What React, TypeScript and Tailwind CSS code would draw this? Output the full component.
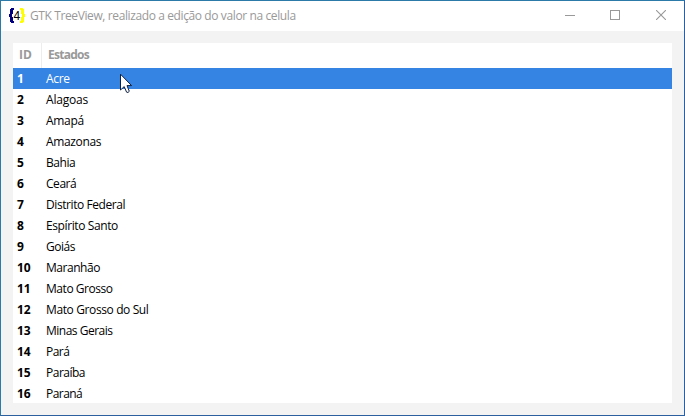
const estados = [
  { nome: "Acre", tracking: "tracking-[-0.3px]" },
  { nome: "Alagoas", tracking: "tracking-[-0.2px]" },
  { nome: "Amapá", tracking: "tracking-[-0.3px]" },
  { nome: "Amazonas", tracking: "tracking-[-0.35px]" },
  { nome: "Bahia", tracking: "tracking-[-0.45px]" },
  { nome: "Ceará", tracking: "tracking-[-0.45px]" },
  { nome: "Distrito Federal", tracking: "tracking-[-0.42px]" },
  { nome: "Espírito Santo", tracking: "tracking-[-0.39px]" },
  { nome: "Goiás", tracking: "tracking-[-0.45px]" },
  { nome: "Maranhão", tracking: "tracking-[-0.47px]" },
  { nome: "Mato Grosso", tracking: "tracking-[-0.45px]" },
  { nome: "Mato Grosso do Sul", tracking: "tracking-[-0.38px]" },
  { nome: "Minas Gerais", tracking: "tracking-[-0.5px]" },
  { nome: "Pará", tracking: "tracking-[-0.55px]" },
  { nome: "Paraíba", tracking: "tracking-[-0.5px]" },
  { nome: "Paraná", tracking: "tracking-[-0.55px]" },
];

function AppIcon() {
  return (
    <svg width="16" height="16" viewBox="0 0 16 16" className="mb-px shrink-0">
      <g shapeRendering="crispEdges">
        <path d="M2 0H5V2H4V6H3V9H4V13H5V15H2V14H1V9H0V6H1V1H2Z" fill="#000080" />
        <path d="M14 0H11V2H12V6H13V9H12V13H11V15H14V14H15V9H16V6H15V1H14Z" fill="#ffff00" />
      </g>
      <text x="4.6" y="12" fontFamily="Liberation Sans, sans-serif" fontSize="12" fill="#000">4</text>
    </svg>
  );
}

function TitleBar() {
  return (
    <header className="flex h-[30px] shrink-0 items-center bg-white pl-2">
      <AppIcon />
      <h1 className="ml-[5px] flex-1 text-[12px] leading-4 tracking-[-0.39px] text-[#999999]">
        GTK TreeView, realizado a edição do valor na celula
      </h1>
      <div className="flex self-start text-[#999999]">
        <button aria-label="Minimizar" className="flex h-7 w-11 items-center justify-center">
          <svg width="10" height="10" viewBox="0 0 10 10" shapeRendering="crispEdges"><path d="M0 5.5H10" stroke="currentColor" /></svg>
        </button>
        <button aria-label="Maximizar" className="flex h-7 w-[46px] items-center justify-center">
          <svg width="10" height="10" viewBox="0 0 10 10" fill="none" shapeRendering="crispEdges"><path d="M.5.5H9.5V9.5H.5Z" stroke="currentColor" /></svg>
        </button>
        <button aria-label="Fechar" className="flex h-7 w-[46px] items-center justify-center">
          <svg width="10" height="10" viewBox="0 0 10 10"><path d="M0 0L10 10M10 0L0 10" stroke="currentColor" strokeWidth="1.1" /></svg>
        </button>
      </div>
    </header>
  );
}

function Pointer() {
  return (
    <svg className="absolute left-[119px] top-[72px]" width="13" height="21" viewBox="0 0 13 21">
      <path d="M.5 1.2V17L4.2 13.6L6.6 19.2Q8 20.2 9.3 18.3L7 12.6H11.6Z" fill="#fff" stroke="#102040" strokeWidth="1" />
    </svg>
  );
}

export default function App() {
  return (
    <div className="relative flex h-[416px] w-[685px] flex-col overflow-hidden border border-[#2c7aa8] border-r-[#2c5f9e] border-b-[#2c5f9e] bg-[#f3f3f3] font-['Open_Sans','Noto_Sans',sans-serif] text-[12px] text-black">
      <TitleBar />
      <main className="mx-3 mt-3 h-[360px] overflow-hidden bg-white">
        <div className="flex h-[25px] font-bold text-[#999999]">
          <div className="w-[29px] border-r border-[#ededed] pl-[6px] leading-6">ID</div>
          <div className="pl-[6px] leading-6 tracking-[-0.75px]">Estados</div>
        </div>
        {estados.map((estado, i) => (
          <div key={estado.nome} className={`flex h-[21px] leading-[21px] ${i === 0 ? "bg-[#3584e4] text-white" : ""}`}>
            <div className="w-[33px] pl-1 font-bold">{i + 1}</div>
            <div className={estado.tracking}>{estado.nome}</div>
          </div>
        ))}
      </main>
      <Pointer />
    </div>
  );
}
